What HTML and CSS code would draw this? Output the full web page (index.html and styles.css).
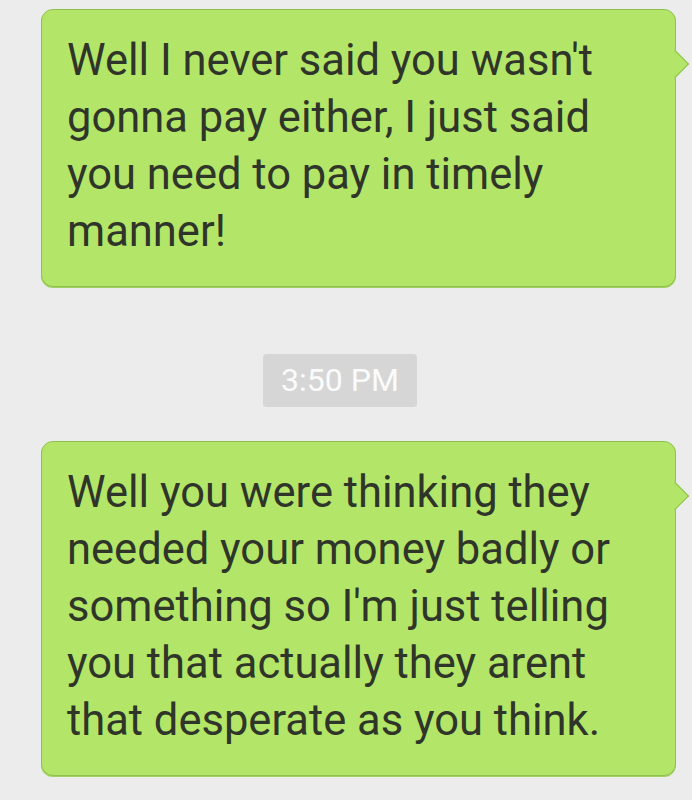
FILE: index.html
```html
<!DOCTYPE html>
<html>
<head>
<meta charset="utf-8">
<link rel="stylesheet" href="styles.css">
</head>
<body>
<div class="thread">
  <div class="bubble">Well I never said you wasn't gonna pay either, I just said you need to pay in timely manner!</div>
  <div class="stamp-row"><span class="stamp">3:50 PM</span></div>
  <div class="bubble">Well you were thinking they needed your money badly or something so I'm just telling you that actually they arent that desperate as you think.</div>
</div>
</body>
</html>
```
FILE: styles.css
```css
html, body {
  margin: 0;
  padding: 0;
  background: #ececec;
}
body {
  width: 692px;
  height: 800px;
  overflow: hidden;
  font-family: Roboto, "Noto Sans", sans-serif;
}
.thread {
  display: flex;
  flex-direction: column;
  padding: 9px 16px 0 41px;
}
.bubble {
  position: relative;
  box-sizing: border-box;
  width: 635px;
  background: #b3e668;
  border: 1px solid #8ec24f;
  box-shadow: 0 1px 0 #a2cf62;
  border-radius: 12px;
  padding: 22px 40px 26px 25px;
  font-size: 43.5px;
  line-height: 57px;
  color: #2f3529;
}
.bubble::after {
  content: "";
  position: absolute;
  right: -10px;
  top: 44px;
  width: 19px;
  height: 19px;
  background: #b3e668;
  border-top: 1px solid #8ec24f;
  border-right: 1px solid #8ec24f;
  transform: rotate(45deg);
}
.stamp-row {
  display: flex;
  padding-left: 222px;
  margin: 67px 0 34px;
}
.stamp {
  display: block;
  width: 154px;
  height: 53px;
  line-height: 53px;
  text-align: center;
  background: #d6d6d6;
  border-radius: 4px;
  color: #fbfbfb;
  font-size: 32px;
}
```
